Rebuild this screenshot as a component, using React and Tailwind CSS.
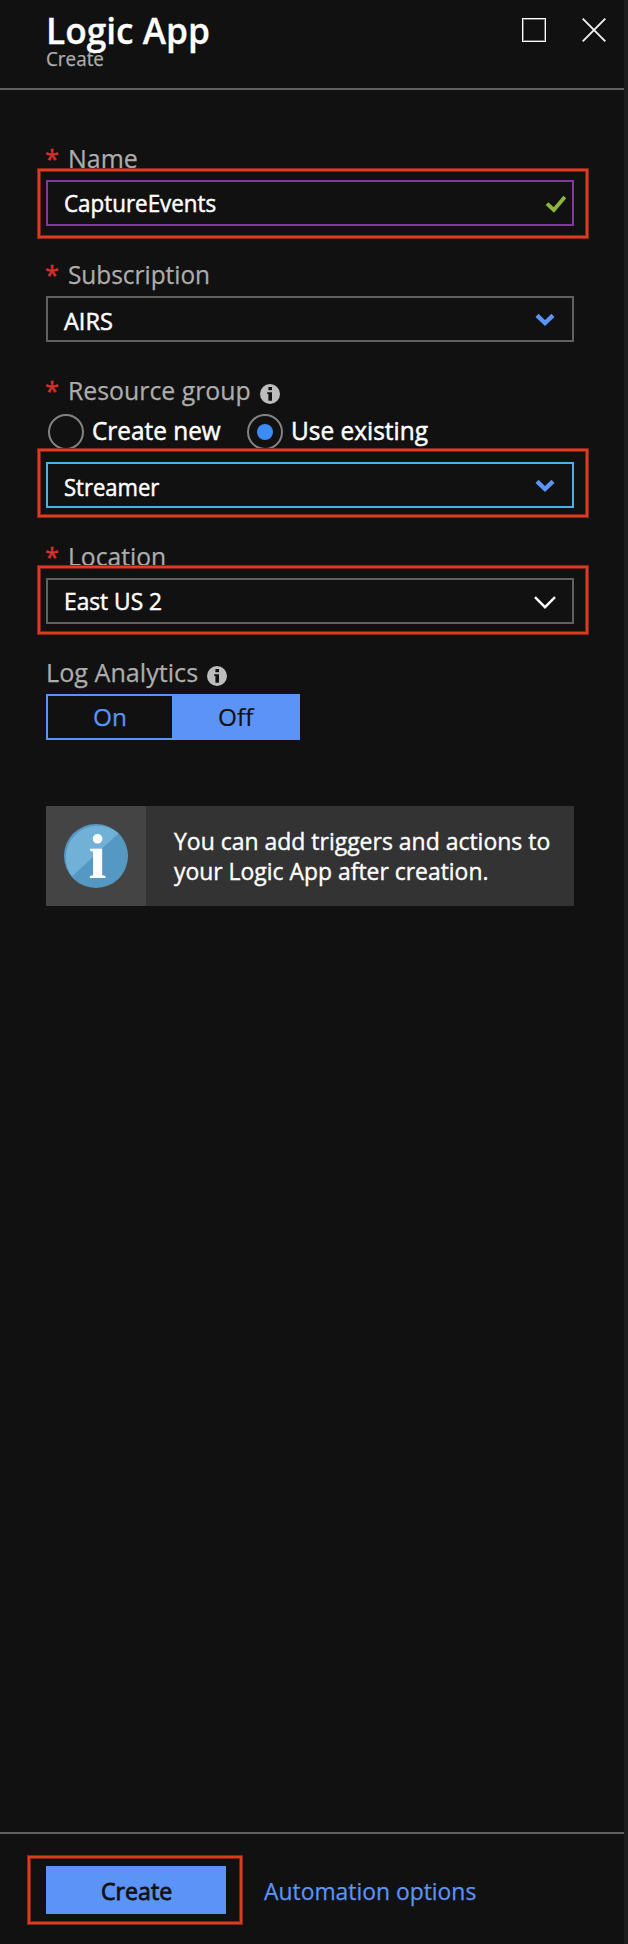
import { useLayoutEffect, useRef, useState } from "react";

// Single line of text condensed or widened to fill an exact width.
function Fit({ w, className = "", children }) {
  const ref = useRef(null);
  const [scale, setScale] = useState(1);
  useLayoutEffect(() => {
    const natural = ref.current.offsetWidth;
    if (natural) setScale(w / natural);
  }, [w]);
  return (
    <span className={`block shrink-0 whitespace-nowrap ${className}`} style={{ width: w }}>
      <span
        ref={ref}
        className="inline-block origin-left align-top"
        style={{ transform: `scaleX(${scale})` }}
      >
        {children}
      </span>
    </span>
  );
}

function Highlight({ className }) {
  return (
    <div
      className={`pointer-events-none absolute border border-[#85281a] shadow-[inset_0_0_0_2px_#dc3d20,inset_0_0_0_3px_#7d2415] ${className}`}
    />
  );
}

function InfoDot({ className = "" }) {
  return (
    <svg viewBox="0 0 20 20" className={`h-5 w-5 shrink-0 ${className}`}>
      <circle cx="10" cy="10" r="10" fill="#bdbdbd" />
      <rect x="8.4" y="3" width="3.6" height="3.2" fill="#111" />
      <path d="M7.2 8.2H12V16.8H8.4V10H7.2Z" fill="#111" />
    </svg>
  );
}

function Label({ w, required = true, info = false, children }) {
  return (
    <div className="flex h-[39px] text-[25.5px] leading-[34px] text-[#adadad] [-webkit-text-stroke:0.25px_#adadad]">
      {required && (
        <span className="-ml-px w-[23px] shrink-0 text-[#d9302c] [-webkit-text-stroke:0.4px_#d9302c]">*</span>
      )}
      <Fit w={w}>{children}</Fit>
      {info && <InfoDot className="mt-[11px] ml-[9px]" />}
    </div>
  );
}

function Chevron() {
  return (
    <svg viewBox="0 0 24 24" className="mr-[15px] h-6 w-6" fill="none">
      <path d="M4 8.4L12 16L20 8.4" stroke="#5c93f7" strokeWidth="4.4" />
    </svg>
  );
}

function ThinChevron() {
  return (
    <svg viewBox="0 0 24 24" className="mr-[15px] h-6 w-6" fill="none">
      <path d="M2 8.2L12 18.2L22 8.2" stroke="#fff" strokeWidth="2.4" />
    </svg>
  );
}

function Field({ border, w, text, shift = "", icon, highlight }) {
  return (
    <div className={`relative flex h-[46px] items-center justify-between border-2 pl-4 ${border}`}>
      <Fit w={w} className={`text-[24px] leading-[30px] text-white [-webkit-text-stroke:0.5px_white] ${shift}`}>
        {text}
      </Fit>
      {icon}
      {highlight && <Highlight className={highlight} />}
    </div>
  );
}

function Radio({ checked, w, className = "", children }) {
  return (
    <div className={`flex items-center ${className}`}>
      <span className="flex h-9 w-9 shrink-0 items-center justify-center rounded-full border-2 border-[#828282]">
        {checked && <span className="h-4 w-4 rounded-full bg-[#3d8bf5]" />}
      </span>
      <Fit w={w} className="ml-[7.5px] -mt-1 text-[25.5px] leading-[34px] text-white [-webkit-text-stroke:0.5px_white]">
        {children}
      </Fit>
    </div>
  );
}

export default function App() {
  return (
    <div className="flex h-[1944px] w-[628px] bg-[#1d1d1d] font-['Open_Sans',sans-serif]">
      <div className="flex w-[624px] shrink-0 flex-col bg-[#111111]">
        <header className="flex h-[90px] shrink-0 justify-between border-b-2 border-[#606060] pt-[13px] pl-[46px]">
          <div>
            <Fit w={163.5} className="h-9 text-[36px] leading-[36px] font-semibold text-white [-webkit-text-stroke:0.3px_white]">
              Logic App
            </Fit>
            <Fit w={57.5} className="h-5 text-[20px] leading-[20px] text-[#adadad] [-webkit-text-stroke:0.25px_#adadad]">
              Create
            </Fit>
          </div>
          <div className="mt-[5px] mr-[18px] flex gap-9">
            <svg viewBox="0 0 24 24" className="h-6 w-6" fill="none">
              <rect x="0.5" y="0.5" width="23" height="23" stroke="#fff" />
              <rect x="1.5" y="1.5" width="21" height="21" stroke="#6f6f6f" />
            </svg>
            <svg viewBox="0 0 24 24" className="h-6 w-6" fill="none">
              <path d="M0.7 0.7L23.3 23.3M23.3 0.7L0.7 23.3" stroke="#f2f2f2" strokeWidth="1.9" />
            </svg>
          </div>
        </header>

        <main className="flex w-[574px] flex-1 flex-col pt-[51px] pl-[46px]">
          <Label w={69.5}>Name</Label>
          <Field
            border="border-[#86349f]"
            w={152}
            text="CaptureEvents"
            shift="-mt-px"
            highlight="-top-[14px] -right-[17px] -bottom-[15px] -left-[11px]"
            icon={
              <svg viewBox="0 0 24 24" className="mr-1 h-6 w-6" fill="none">
                <path d="M3 12.6L9.8 19L20.8 6" stroke="#8cb83a" strokeWidth="3.8" />
              </svg>
            }
          />
          <div className="h-[31px]" />
          <Label w={142.5}>Subscription</Label>
          <Field border="border-[#606060]" w={49} text="AIRS" shift="mt-[3px]" icon={<Chevron />} />
          <div className="h-[31px]" />
          <Label w={183} info>Resource group</Label>
          <div className="flex h-[50px] pt-0.5 pl-[2px]">
            <Radio w={129} className="h-9">Create new</Radio>
            <Radio w={137} className="ml-[26.5px] h-9" checked>Use existing</Radio>
          </div>
          <Field
            border="border-[#4db1e8]"
            w={95.5}
            text="Streamer"
            shift="mt-[3px]"
            icon={<Chevron />}
            highlight="-top-4 -right-[17px] -bottom-3 -left-[11px]"
          />
          <div className="h-[31px]" />
          <Label w={98.5}>Location</Label>
          <Field
            border="border-[#606060]"
            w={98.5}
            text="East US 2"
            icon={<ThinChevron />}
            highlight="-top-[15px] -right-[17px] -bottom-[13px] -left-[11px]"
          />
          <div className="h-[31px]" />
          <Label w={152} required={false} info>Log Analytics</Label>
          <div className="flex h-[46px] w-[254px] border-2 border-[#5c93f7] text-[24px] leading-[42px]">
            <div className="w-[124px] pl-[45px] text-[#5c93f7] [-webkit-text-stroke:0.25px_#5c93f7]"><Fit w={33.5}>On</Fit></div>
            <div className="flex-1 bg-[#5c93f7] pl-[46px] text-[#111] [-webkit-text-stroke:0.2px_#111]"><Fit w={35.5}>Off</Fit></div>
          </div>

          <div className="mt-[66px] flex h-[100px] bg-[#333333]">
            <div className="flex w-[100px] shrink-0 items-center justify-center bg-[#444444]">
              <svg viewBox="0 0 64 64" className="h-16 w-16">
                <circle cx="32" cy="32" r="32" fill="#5598c3" />
                <path d="M8 52.5A32 32 0 0 1 54.5 9.2Z" fill="#71b1d7" />
                <text x="33.5" y="53.5" textAnchor="middle" fontFamily="Liberation Serif" fontWeight="700" fontSize="64" fill="#fff">i</text>
              </svg>
            </div>
            <div className="pt-5 pl-7 text-[24px] leading-[30px] text-white [-webkit-text-stroke:0.4px_white]">
              <Fit w={376}>You can add triggers and actions to</Fit>
              <Fit w={314}>your Logic App after creation.</Fit>
            </div>
          </div>
        </main>

        <footer className="flex h-28 shrink-0 border-t-2 border-[#606060] pt-8 pl-[46px] text-[24px] leading-[49px]">
          <button className="relative flex h-12 w-[180px] bg-[#5c93f7] pl-[54.5px] text-left text-[#111] [-webkit-text-stroke:0.8px_#111]">
            <Fit w={71.5}>Create</Fit>
            <Highlight className="-top-[11px] -right-[17px] -bottom-[11px] -left-[19px]" />
          </button>
          <a className="ml-[38px] text-[#5c93f7] [-webkit-text-stroke:0.25px_#5c93f7]"><Fit w={212.5}>Automation options</Fit></a>
        </footer>
      </div>
    </div>
  );
}
